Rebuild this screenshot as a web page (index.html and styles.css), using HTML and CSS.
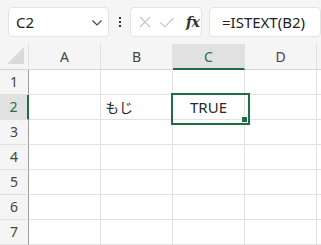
FILE: index.html
```html
<!DOCTYPE html>
<html>
<head>
<meta charset="utf-8">
<link rel="stylesheet" href="styles.css">
</head>
<body>
<div class="app">
  <div class="toolbar">
    <div class="namebox">
      <span class="name">C2</span>
      <svg class="chev" width="10" height="6" viewBox="0 0 10 6"><path d="M0.5 0.5 L5 5 L9.5 0.5" fill="none" stroke="#444" stroke-width="1.2"/></svg>
    </div>
    <div class="dots"><span></span><span></span><span></span></div>
    <div class="btns">
      <svg width="12" height="12" viewBox="0 0 12 12"><path d="M1 1 L11 11 M11 1 L1 11" stroke="#c4c4c4" stroke-width="1.1" fill="none"/></svg>
      <svg width="14" height="11" viewBox="0 0 14 11"><path d="M0.5 5.5 L4.8 9.8 L13.5 1" stroke="#c4c4c4" stroke-width="1.1" fill="none"/></svg>
      <span class="fx">fx</span>
    </div>
    <div class="formula">=ISTEXT(B2)</div>
  </div>
  <div class="sheet">
    <div class="corner"><svg width="18" height="18" viewBox="0 0 18 18"><path d="M17 0 L17 17 L0 17 Z" fill="#dadada"/></svg></div>
    <div class="ch">A</div>
    <div class="ch">B</div>
    <div class="ch sel">C</div>
    <div class="ch">D</div>
    <div class="ch last"></div>

    <div class="rh">1</div><div class="c"></div><div class="c"></div><div class="c"></div><div class="c"></div><div class="c last"></div>
    <div class="rh sel">2</div><div class="c"></div><div class="c jp">もじ</div><div class="c active"><span>TRUE</span><i class="handle"></i></div><div class="c"></div><div class="c last"></div>
    <div class="rh">3</div><div class="c"></div><div class="c"></div><div class="c"></div><div class="c"></div><div class="c last"></div>
    <div class="rh">4</div><div class="c"></div><div class="c"></div><div class="c"></div><div class="c"></div><div class="c last"></div>
    <div class="rh">5</div><div class="c"></div><div class="c"></div><div class="c"></div><div class="c"></div><div class="c last"></div>
    <div class="rh">6</div><div class="c"></div><div class="c"></div><div class="c"></div><div class="c"></div><div class="c last"></div>
    <div class="rh">7</div><div class="c"></div><div class="c"></div><div class="c"></div><div class="c"></div><div class="c last"></div>
  </div>
</div>
</body>
</html>
```
FILE: styles.css
```css
* { box-sizing: border-box; }
html, body { margin: 0; padding: 0; }
body {
  width: 321px;
  height: 245px;
  overflow: hidden;
  background: #ffffff;
  font-family: "Noto Sans", "Noto Sans CJK JP", sans-serif;
  color: #222;
}
.app { width: 321px; height: 245px; overflow: hidden; }
.toolbar {
  height: 44px;
  background: #f5f5f5;
  display: flex;
  align-items: flex-start;
  padding: 7px 0 0 8px;
}
.namebox {
  width: 101px;
  height: 30px;
  background: #fff;
  border: 1px solid #e3e3e3;
  border-radius: 4px;
  display: flex;
  align-items: center;
  justify-content: space-between;
  padding: 0 6px 0 7px;
}
.name { font-size: 15px; color: #222; }
.chev { margin-top: 1px; }
.dots {
  width: 21px;
  height: 30px;
  display: flex;
  flex-direction: column;
  align-items: center;
  justify-content: center;
  gap: 2px;
}
.dots span { width: 2px; height: 2px; background: #333; display: block; }
.btns {
  width: 72px;
  height: 30px;
  background: #fff;
  border: 1px solid #e3e3e3;
  border-radius: 4px;
  display: flex;
  align-items: center;
  padding: 0 0 0 8px;
  gap: 9px;
}
.fx {
  font-family: "DejaVu Serif", "Liberation Serif", serif;
  font-style: italic;
  font-weight: bold;
  font-size: 14px;
  color: #333;
  margin-left: 3px;
  letter-spacing: -0.5px;
}
.formula {
  margin-left: 7px;
  width: 112px;
  height: 30px;
  background: #fff;
  border: 1px solid #e3e3e3;
  border-radius: 4px;
  font-size: 15px;
  line-height: 28px;
  padding-left: 12px;
  white-space: nowrap;
  overflow: hidden;
  color: #222;
}
.sheet {
  display: grid;
  grid-template-columns: 29px 72px 72px 72px 72px 10px;
  grid-template-rows: 26px repeat(7, 25px);
}
.corner {
  background: #f5f5f5;
  border-right: 1px solid #e1e1e1;
  border-bottom: 1px solid #d5d5d5;
  display: flex;
  align-items: flex-end;
  justify-content: flex-end;
  padding: 0 3px 4px 0;
}
.ch {
  background: #f5f5f5;
  border-right: 1px solid #e1e1e1;
  border-bottom: 1px solid #d5d5d5;
  text-align: center;
  font-size: 14px;
  line-height: 25px;
  color: #444;
}
.ch.sel {
  background: #e1e1e1;
  border-bottom: 2px solid #1f6e43;
  color: #2e6b48;
}
.rh {
  background: #f5f5f5;
  border-right: 1px solid #9f9f9f;
  border-bottom: 1px solid #e1e1e1;
  text-align: center;
  font-size: 14px;
  line-height: 24px;
  color: #444;
}
.rh.sel {
  background: #e1e1e1;
  border-right: 2px solid #1f6e43;
  color: #2e6b48;
}
.c {
  border-right: 1px solid #e1e1e1;
  border-bottom: 1px solid #e1e1e1;
  font-size: 15px;
  line-height: 24px;
  padding-left: 4px;
  color: #2a2a2a;
}
.c.last { border-right: none; }
.jp { font-family: "Noto Sans CJK JP", sans-serif; font-size: 14px; }
.active {
  position: relative;
  text-align: center;
  padding-left: 0;
}
.active::before {
  content: "";
  position: absolute;
  left: -2px;
  top: -2px;
  width: 75px;
  height: 28px;
  border: 2px solid #1f6e43;
}
.active span { position: relative; }
.handle {
  position: absolute;
  right: -4px;
  bottom: -4px;
  width: 5px;
  height: 5px;
  background: #1f6e43;
  border: 1px solid #fff;
  box-sizing: content-box;
}
```
